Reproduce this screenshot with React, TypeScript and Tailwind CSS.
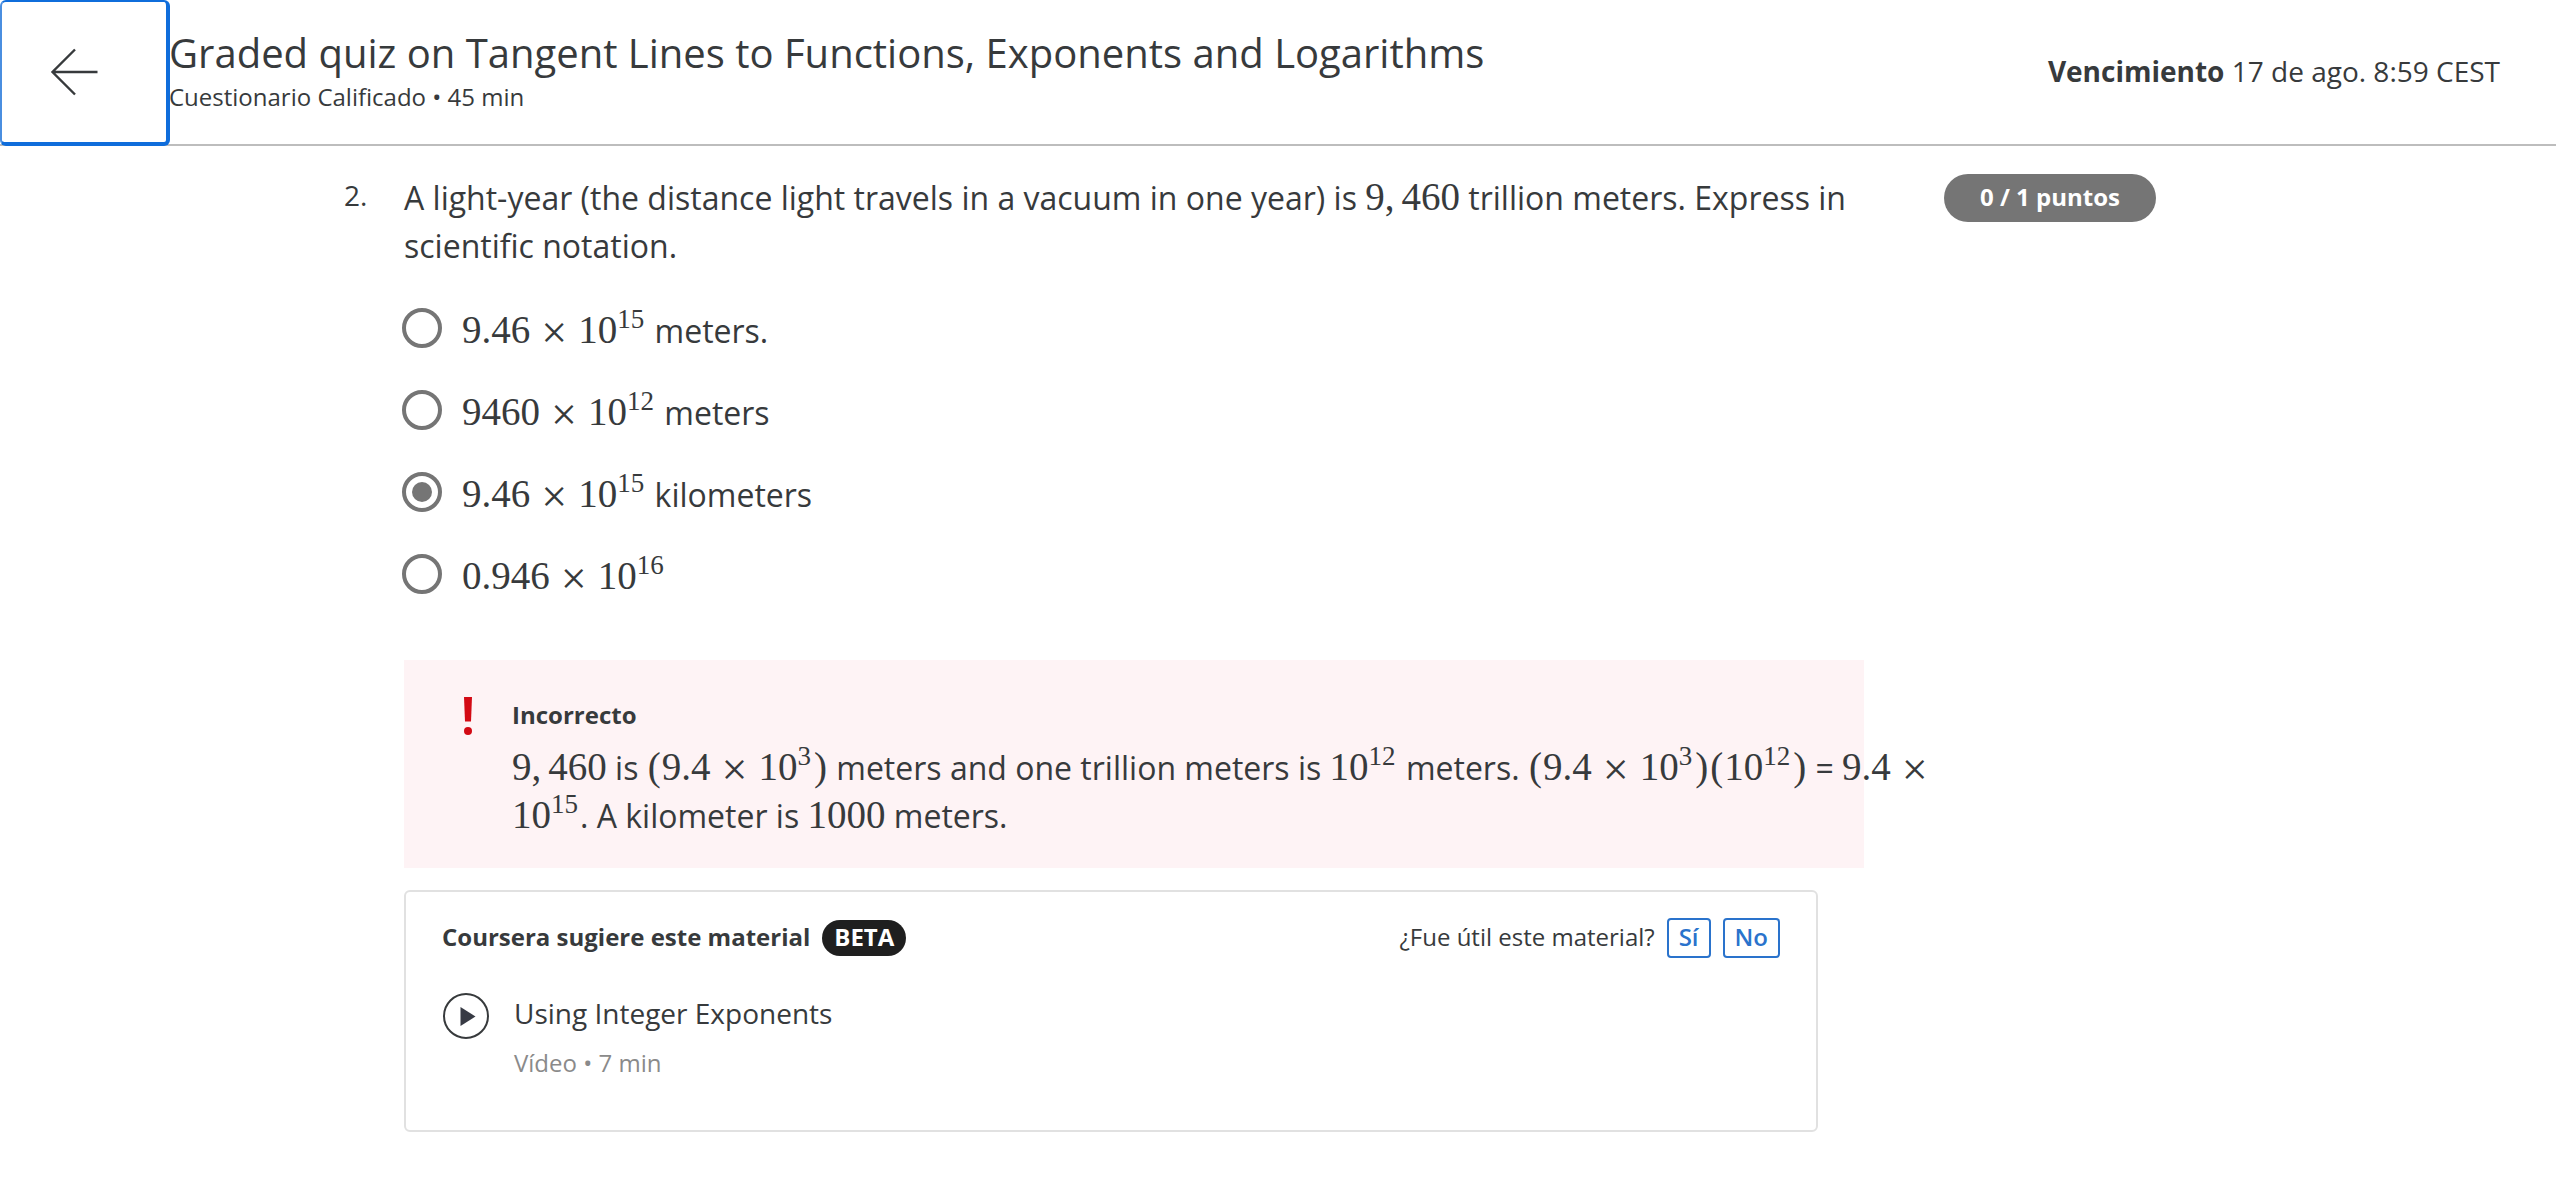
import { useState } from "react";
import type { ReactNode } from "react";

function M({ children }: { children: ReactNode }) {
  return (
    <span className="font-['Liberation_Serif',serif] text-[39px] leading-[0]">{children}</span>
  );
}

function Times() {
  return (
    <span className="mx-[9px] inline-block w-[30px] text-center align-[-5px] text-[46px] leading-[0]">×</span>
  );
}

function Comma() {
  return <span className="mr-[7px]">,</span>;
}

function Paren({ children }: { children: string }) {
  return <span className="inline-block w-[15px] text-center leading-[0]">{children}</span>;
}

function Pow({ exp }: { exp: string }) {
  return (
    <>
      10<sup className="top-0 mr-[2px] align-[15px] text-[27px] leading-[0]">{exp}</sup>
    </>
  );
}

const options: { id: string; label: ReactNode }[] = [
  { id: "a", label: <><M>9.46<Times /><Pow exp="15" /></M> meters.</> },
  { id: "b", label: <><M>9460<Times /><Pow exp="12" /></M> meters</> },
  { id: "c", label: <><M>9.46<Times /><Pow exp="15" /></M> kilometers</> },
  { id: "d", label: <M>0.946<Times /><Pow exp="16" /></M> },
];

function Header() {
  return (
    <header className="flex border-b-2 border-[#bdbdbd] bg-white">
      <button
        type="button"
        aria-label="Volver"
        className="z-10 -mr-px -mb-[2px] flex w-[170px] shrink-0 items-center rounded-md border-t-2 border-r-4 border-b-4 border-l-2 border-[#0f6ddb] border-l-[#4a8ee0] bg-white pl-[48px]"
      >
        <svg width="48" height="48" viewBox="0 0 48 48" fill="none" stroke="#373a3c" strokeWidth="2.4">
          <path d="M47.5 24H3M25 1.5 2.5 24 25 46.5" />
        </svg>
      </button>
      <div className="min-w-0 flex-1 pt-7 pb-7">
        <h1 className="text-[40px] leading-[50px]">
          Graded quiz on Tangent Lines to Functions, Exponents and Logarithms
        </h1>
        <p className="text-[24px] leading-[38px]">Cuestionario Calificado • 45 min</p>
      </div>
      <p className="self-center pr-14 pb-[2px] text-[28px] leading-[42px]">
        <strong className="font-bold">Vencimiento</strong> 17 de ago. 8:59 CEST
      </p>
    </header>
  );
}

function Feedback() {
  return (
    <section className="mt-[60px] flex bg-[#fef3f5] pt-[37px] pb-7 pl-[60px]">
      <svg className="mr-[40px] shrink-0" width="8" height="38" viewBox="0 0 8 38" fill="#d30a14">
        <path d="M0 0H8L7 24.500H1Z" />
        <circle cx="4" cy="34" r="4" />
      </svg>
      <div className="-mr-20 min-w-0 flex-1">
        <h2 className="text-[24px] leading-[36px] font-bold">Incorrecto</h2>
        <p className="mt-[11px] text-[32px] leading-[48px]">
          <M>9<Comma />460</M> is <M><Paren>(</Paren>9.4<Times /><Pow exp="3" /><Paren>)</Paren></M> meters and
          one trillion meters is <M><Pow exp="12" /></M> meters.{" "}
          <M><Paren>(</Paren>9.4<Times /><Pow exp="3" /><Paren>)</Paren><Paren>(</Paren><Pow exp="12" /><Paren>)</Paren></M>
          {" = "}
          <M>9.4<Times /><Pow exp="15" /></M>. A kilometer is <M>1000</M> meters.
        </p>
      </div>
    </section>
  );
}

function Suggestion() {
  return (
    <section className="mt-[22px] mr-[46px] rounded-md border-2 border-[#e1e1e1] px-9 pt-[26px] pb-[49px]">
      <div className="flex items-center justify-between text-[24px] leading-[34px]">
        <div className="flex items-center gap-3">
          <h2 className="pb-[2px] font-bold">Coursera sugiere este material</h2>
          <span className="rounded-full bg-[#1f1f1f] px-3 pb-[2px] font-bold text-white">BETA</span>
        </div>
        <div className="flex items-center gap-3">
          <span className="pb-[2px]">¿Fue útil este material?</span>
          <button type="button" className="rounded border-2 border-[#2a73cc] px-[10px] pb-[2px] font-semibold text-[#2a73cc]">Sí</button>
          <button type="button" className="rounded border-2 border-[#2a73cc] px-[10px] pb-[2px] font-semibold text-[#2a73cc]">No</button>
        </div>
      </div>
      <div className="mt-[34px] flex gap-6">
        <svg className="mt-px shrink-0" width="48" height="48" viewBox="0 0 48 48" fill="none">
          <circle cx="24" cy="23" r="22" stroke="#373a3c" strokeWidth="2" />
          <path d="M18.500 14 33.500 23.500 18.500 33Z" fill="#373a44" />
        </svg>
        <div>
          <a href="#" className="block text-[28px] leading-[42px]">Using Integer Exponents</a>
          <p className="mt-[11px] text-[24px] leading-[36px] text-[#8a8a8a]">Vídeo • 7 min</p>
        </div>
      </div>
    </section>
  );
}

export default function App() {
  const [selected, setSelected] = useState("c");
  return (
    <div className="min-h-screen bg-white font-['Open_Sans',sans-serif] text-[#373a3c]">
      <Header />
      <main className="flex items-start pt-7 pr-[400px] pl-[344px]">
        <div className="w-[60px] shrink-0 text-[28px] leading-[42px]">2.</div>
        <div className="min-w-0 flex-1">
          <fieldset>
            <legend className="text-[32px] leading-[48px]">
              A light-year (the distance light travels in a vacuum in one year) is <M>9<Comma />460</M> trillion
              meters. Express in scientific notation.
            </legend>
            <div className="mt-[37px] -ml-[2px] flex flex-col gap-[34px]">
              {options.map((o) => (
                <label key={o.id} className="flex items-start gap-5 text-[32px] leading-[48px]">
                  <input
                    type="radio"
                    name="answer"
                    checked={selected === o.id}
                    onChange={() => setSelected(o.id)}
                    className="mt-px grid h-10 w-10 shrink-0 appearance-none place-items-center rounded-full border-4 border-[#757575] before:h-5 before:w-5 before:rounded-full checked:before:bg-[#757575]"
                  />
                  <span>{o.label}</span>
                </label>
              ))}
            </div>
          </fieldset>
          <div className="-mt-px">
            <Feedback />
          </div>
          <Suggestion />
        </div>
        <div className="ml-20 w-[212px] shrink-0 rounded-full bg-[#757575] pb-[2px] text-center text-[24px] leading-[46px] font-bold text-white">
          0 / 1 puntos
        </div>
      </main>
    </div>
  );
}
